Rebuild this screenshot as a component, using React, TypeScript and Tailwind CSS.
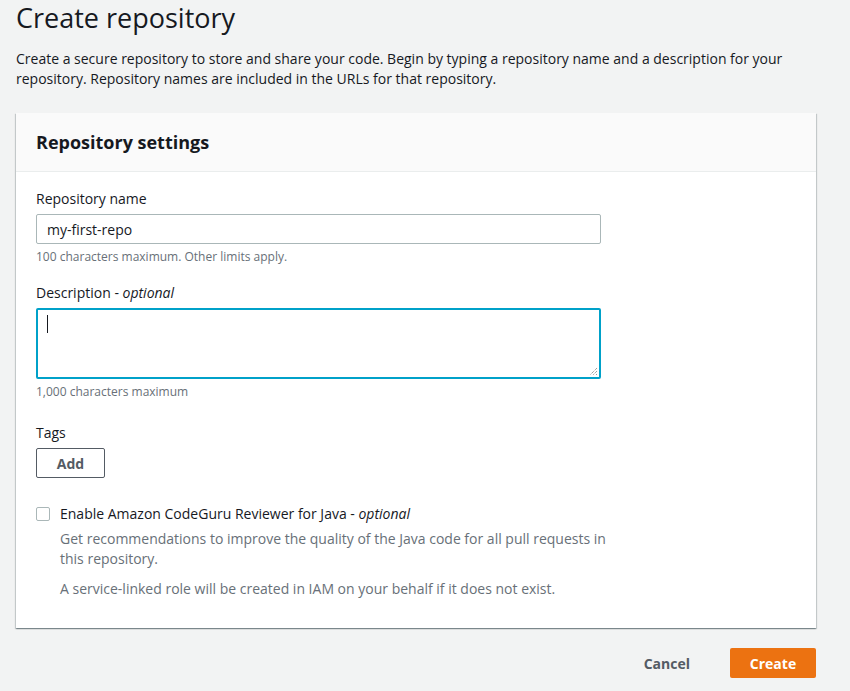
export default function App() {
  return (
    <div className="min-h-[691px] bg-[#f2f3f3] px-4 pb-4 text-[#16191f] [font-family:'Open_Sans',sans-serif]">
      <h1 className="text-[27px] leading-[36px] font-normal">Create repository</h1>
      <p className="mt-[13px] text-[14px] leading-[20px]">
        Create a secure repository to store and share your code. Begin by typing a repository name and a description for your
        <br />
        repository. Repository names are included in the URLs for that repository.
      </p>

      <div className="mt-[24px] w-[800px] bg-white shadow-[0_1px_1px_0_rgba(0,28,36,0.3),1px_1px_1px_0_rgba(0,28,36,0.15),-1px_1px_1px_0_rgba(0,28,36,0.15)]">
        <div className="h-[59px] bg-[#fafafa] border-b border-[#eaeded] px-5 flex items-center">
          <h2 className="text-[18px] leading-[22px] font-bold">Repository settings</h2>
        </div>
        <div className="px-5 pt-[17px] pb-[29px]">
          <label className="block text-[14px] leading-[20px]">Repository name</label>
          <div className="mt-[5px] w-[565px] h-[30px] border border-[#aab7b8] rounded-[2px] px-[10px] flex items-center text-[14px]">
            my-first-repo
          </div>
          <p className="mt-[5px] text-[12px] leading-[16px] text-[#687078]">100 characters maximum. Other limits apply.</p>

          <label className="block mt-[18px] text-[14px] leading-[20px]">
            Description - <i>optional</i>
          </label>
          <div className="relative mt-[5px] w-[565px] h-[71px] border-2 border-[#00a1c9] rounded-[2px]">
            <span className="absolute left-[9px] top-[5px] w-[1px] h-[18px] bg-[#16191f]" />
            <svg className="absolute right-[1px] bottom-[1px]" width="9" height="9" viewBox="0 0 9 9">
              <path d="M8 1L1 8M8 4L4 8M8 7L7 8" stroke="#777" strokeWidth="1" strokeDasharray="1 1" />
            </svg>
          </div>
          <p className="mt-[5px] text-[12px] leading-[16px] text-[#687078]">1,000 characters maximum</p>

          <label className="block mt-[23px] text-[14px] leading-[20px]">Tags</label>
          <button className="mt-[5px] w-[69px] h-[30px] border border-[#545b64] rounded-[2px] bg-white text-[14px] font-bold text-[#545b64]">
            Add
          </button>

          <div className="mt-[26px] flex gap-[10px]">
            <span className="mt-[3px] w-[14px] h-[14px] border border-[#aab7b8] rounded-[2px] bg-white shrink-0" />
            <div>
              <p className="text-[14px] leading-[20px]">
                Enable Amazon CodeGuru Reviewer for Java - <i>optional</i>
              </p>
              <p className="mt-[5px] text-[14px] leading-[20px] text-[#687078]">
                Get recommendations to improve the quality of the Java code for all pull requests in
                <br />
                this repository.
              </p>
              <p className="mt-[10px] text-[14px] leading-[20px] text-[#687078]">
                A service-linked role will be created in IAM on your behalf if it does not exist.
              </p>
            </div>
          </div>
        </div>
      </div>

      <div className="mt-[20px] w-[800px] flex justify-end items-center gap-[20px]">
        <button className="h-[30px] px-5 text-[14px] font-bold text-[#545b64]">Cancel</button>
        <button className="w-[86px] h-[30px] rounded-[2px] bg-[#ec7211] text-[14px] font-bold text-white">Create</button>
      </div>
    </div>
  )
}
